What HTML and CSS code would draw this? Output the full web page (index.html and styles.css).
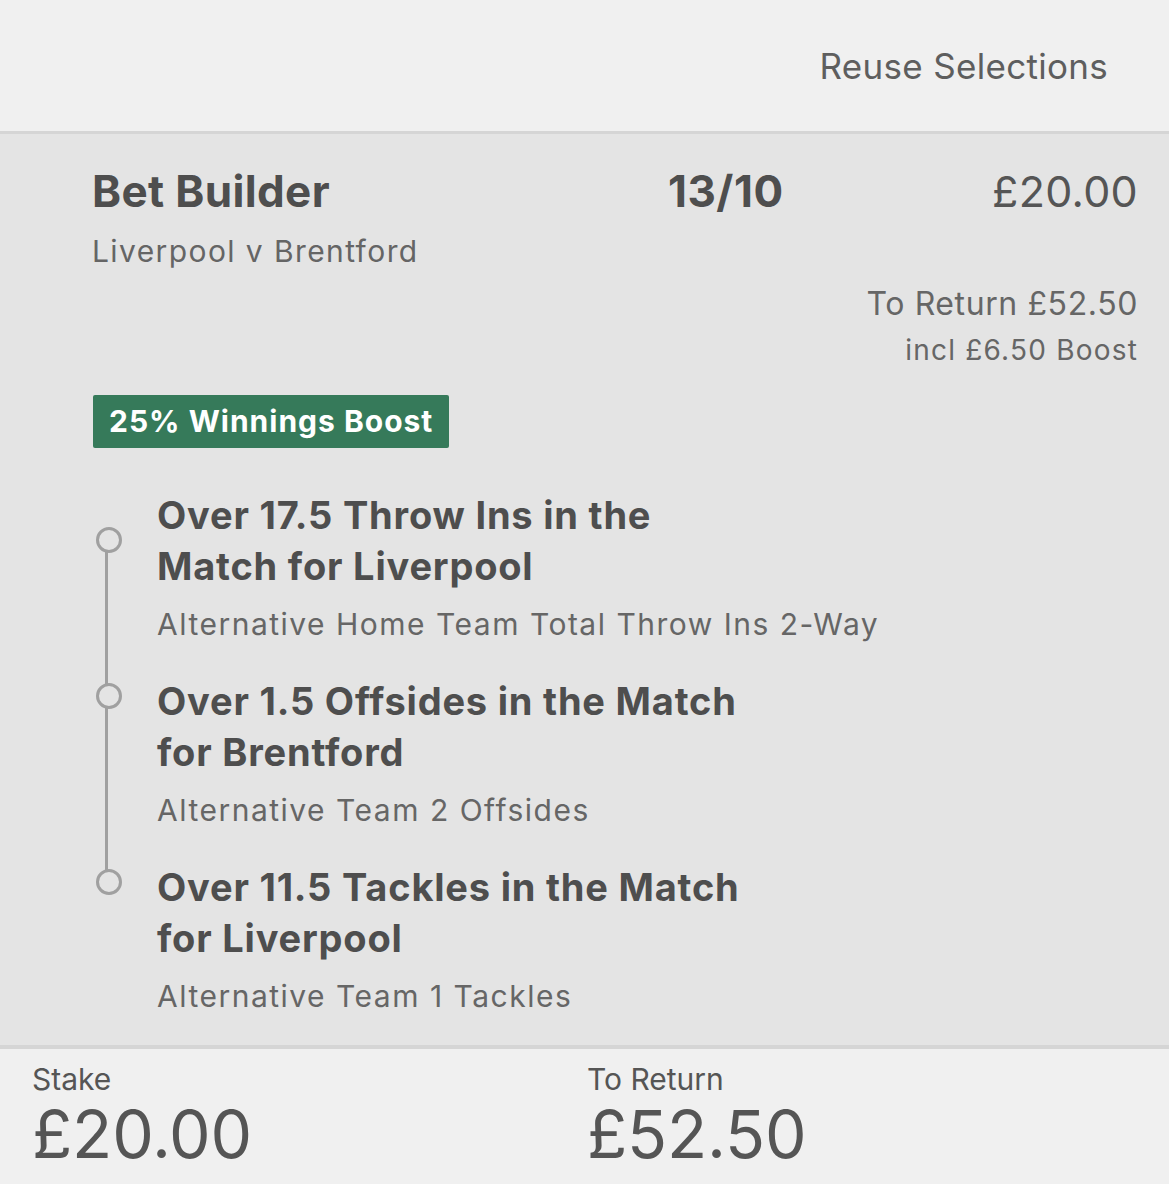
FILE: index.html
```html
<!DOCTYPE html>
<html>
<head>
<meta charset="utf-8">
<link rel="stylesheet" href="styles.css">
</head>
<body>
<div class="page">
  <header class="topbar">
    <span class="reuse">Reuse Selections</span>
  </header>
  <main class="bet">
    <div class="bet-head">
      <div class="bet-title">
        <div class="name">Bet Builder</div>
        <div class="event">Liverpool v Brentford</div>
      </div>
      <div class="odds">13/10</div>
      <div class="amount">£20.00</div>
    </div>
    <div class="returns">
      <div class="ret">To Return £52.50</div>
      <div class="incl">incl £6.50 Boost</div>
    </div>
    <div class="badge">25% Winnings Boost</div>
    <ul class="legs">
      <li class="leg">
        <div class="leg-title">Over 17.5 Throw Ins in the<br>Match for Liverpool</div>
        <div class="leg-market">Alternative Home Team Total Throw Ins 2-Way</div>
      </li>
      <li class="leg">
        <div class="leg-title">Over 1.5 Offsides in the Match<br>for Brentford</div>
        <div class="leg-market">Alternative Team 2 Offsides</div>
      </li>
      <li class="leg">
        <div class="leg-title">Over 11.5 Tackles in the Match<br>for Liverpool</div>
        <div class="leg-market">Alternative Team 1 Tackles</div>
      </li>
    </ul>
  </main>
  <footer class="summary">
    <div class="sum-col">
      <div class="sum-label">Stake</div>
      <div class="sum-value">£20.00</div>
    </div>
    <div class="sum-col">
      <div class="sum-label">To Return</div>
      <div class="sum-value">£52.50</div>
    </div>
  </footer>
</div>
</body>
</html>
```

FILE: styles.css
```css
* { box-sizing: border-box; }
html, body { margin: 0; padding: 0; }
body {
  font-family: Inter, "Noto Sans", "DejaVu Sans", sans-serif;
  color: #4e4e4e;
  background: #f0f0f0;
  width: 1169px;
  height: 1184px;
  overflow: hidden;
}
.page { display: flex; flex-direction: column; height: 1184px; }

.topbar {
  height: 134px;
  flex: none;
  background: #f0f0f0;
  border-bottom: 3px solid #d5d5d5;
  display: flex;
  justify-content: flex-end;
  align-items: center;
  padding: 0 61px 0 0;
}
.reuse {
  font-size: 35px;
  letter-spacing: 0.3px;
  color: #5e5e5e;
}

.bet {
  flex: none;
  height: 915px;
  background: #e4e4e4;
  padding: 29px 31px 0 92px;
  border-bottom: 4px solid #d5d5d5;
}
.bet-head {
  display: grid;
  grid-template-columns: 576px 1fr auto;
  align-items: start;
}
.name { font-size: 44px; font-weight: 700; letter-spacing: 0.35px; line-height: 56px; color: #4e4e4e; }
.event { font-size: 30px; letter-spacing: 1.4px; color: #656565; margin-top: 12px; line-height: 40px; }
.odds { font-size: 44px; font-weight: 700; letter-spacing: 0.5px; line-height: 56px; color: #4e4e4e; }
.amount { font-size: 43px; letter-spacing: 0.3px; line-height: 56px; text-align: right; color: #555; }

.returns { text-align: right; margin-top: 11px; }
.ret { font-size: 32px; letter-spacing: 0.6px; color: #666; line-height: 44px; }
.incl { font-size: 28px; letter-spacing: 1.2px; color: #666; line-height: 44px; margin-top: 2px; }

.badge {
  display: block;
  width: fit-content;
  margin-top: 23px;
  margin-left: 1px;
  background: #367a5a;
  color: #fff;
  font-size: 30px;
  font-weight: 700;
  letter-spacing: 1px;
  line-height: 53px;
  padding: 0 16px;
  border-radius: 2px;
}

.legs { list-style: none; margin: 42px 0 0; padding: 0; }
.leg { position: relative; padding-left: 65px; padding-bottom: 30px; }
.leg::before {
  content: "";
  position: absolute;
  left: 4px;
  top: 7px;
  width: 20px; height: 20px;
  border: 3px solid #a0a0a0;
  border-radius: 50%;
  background: #e4e4e4;
  z-index: 1;
}
.leg:first-child::before { top: 37px; }
.leg::after {
  content: "";
  position: absolute;
  left: 13px;
  top: 17px;
  bottom: -17px;
  width: 3px;
  background: #a0a0a0;
}
.leg:first-child::after { top: 47px; }
.leg:last-child::after { display: none; }
.leg-title { font-size: 38px; font-weight: 700; letter-spacing: 0.8px; color: #4e4e4e; line-height: 51px; }
.leg-market { font-size: 30px; letter-spacing: 1.5px; color: #666; line-height: 44px; margin-top: 10px; }

.summary {
  flex: 1;
  background: #f0f0f0;
  display: flex;
  padding: 12px 0 0 32px;
}
.sum-col { width: 555px; }
.sum-label { font-size: 30px; color: #555; line-height: 36px; }
.sum-value { font-size: 66px; letter-spacing: -0.2px; color: #555; line-height: 76px; margin-top: -1px; }
```
